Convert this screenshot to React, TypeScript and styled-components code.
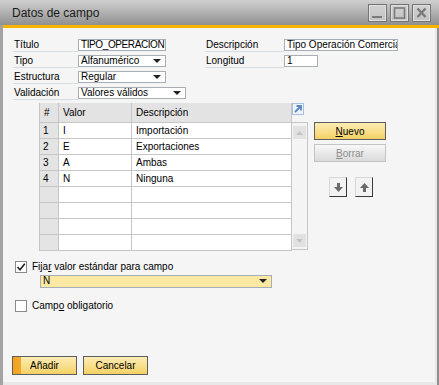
import React from 'react';
import styled, { createGlobalStyle } from 'styled-components';

const Global = createGlobalStyle`
  html, body { margin: 0; padding: 0; background: #ffffff; }
  body { font-family: "Liberation Sans", Arial, sans-serif; font-size: 10px; color: #000; }
  * { box-sizing: border-box; }
`;

const Window = styled.div`
  width: 439px;
  height: 385px;
  display: flex;
  flex-direction: column;
  background: #a3a3a3;
  padding: 0 0 0 3px;
  overflow: hidden;
`;

const TitleBar = styled.div`
  height: 25px;
  margin-left: -3px;
  padding: 0 8px 0 12px;
  display: flex;
  align-items: center;
  justify-content: space-between;
  background: linear-gradient(#d0d0d0 0%, #b4b4b4 45%, #909090 100%);
`;

const TitleText = styled.span`
  font-size: 12px;
  color: #1a1a1a;
  margin-top: 1px;
`;

const WinButtons = styled.div`
  display: flex;
  gap: 3px;
`;

const WinButton = styled.div`
  width: 19px;
  height: 18px;
  border: 1px solid #757575;
  background: linear-gradient(#d2d2d2, #c2c2c2);
  box-shadow: inset 0 0 0 1px #dedede;
  display: flex;
  align-items: center;
  justify-content: center;
`;

const Stripe = styled.div`
  height: 3px;
  background: #f6b300;
`;

const Body = styled.div`
  flex: 1;
  background: #f5f5f5;
  border-right: 2px solid #e8e8e8;
  border-bottom: 3px solid #e8e8e8;
  box-shadow: 2px 0 0 #8e8e8e;
  margin-right: 2px;
  display: flex;
  flex-direction: column;
  padding: 11px 0 0 0;
`;

const Form = styled.div`
  display: flex;
  padding-left: 10px;
`;

const Column = styled.div<{ $w: number }>`
  width: ${p => p.$w}px;
  display: flex;
  flex-direction: column;
  gap: 4px;
`;

const Row = styled.div`
  display: flex;
  height: 12px;
`;

const Label = styled.div<{ $w: number }>`
  width: ${p => p.$w}px;
  height: 13px;
  line-height: 12px;
  padding-left: 1px;
  border-bottom: 1px solid #d6dce4;
  white-space: nowrap;
`;

const Field = styled.div<{ $w: number; $bg?: string; $tight?: boolean; $h?: number }>`
  width: ${p => p.$w}px;
  height: ${p => p.$h || 12}px;
  border: 1px solid #a9aeb4;
  background: ${p => p.$bg || '#ffffff'};
  line-height: 10px;
  padding-left: 2px;
  letter-spacing: ${p => (p.$tight ? '-0.4px' : 'normal')};
  white-space: nowrap;
  overflow: hidden;
  position: relative;
  display: flex;
  align-items: center;
`;

const Caret = styled.span`
  position: absolute;
  right: 4px;
  top: 3px;
  width: 0;
  height: 0;
  border-left: 4px solid transparent;
  border-right: 4px solid transparent;
  border-top: 4px solid #222;
`;

const GridArea = styled.div`
  display: flex;
  margin: 4px 0 0 36px;
`;

const Table = styled.table`
  border-collapse: collapse;
  table-layout: fixed;
  width: 253px;
  border-left: 1px solid #c6c6c6;
`;

const Th = styled.th<{ $w: number }>`
  width: ${p => p.$w}px;
  height: 19px;
  background: #e3e3e3;
  border-right: 1px solid #c6c6c6;
  border-bottom: 1px solid #c6c6c6;
  text-align: left;
  font-weight: normal;
  padding: 0 0 0 4px;
  font-size: 10px;
`;

const Td = styled.td<{ $num?: boolean }>`
  height: 16px;
  background: ${p => (p.$num ? '#e4e4e4' : '#ffffff')};
  border-right: 1px solid #c6c6c6;
  border-bottom: 1px solid #c6c6c6;
  padding: 0 0 0 ${p => (p.$num ? 3 : 4)}px;
  font-size: 10px;
  white-space: nowrap;
  overflow: hidden;
`;

const ScrollCol = styled.div`
  width: 16px;
  display: flex;
  flex-direction: column;
`;

const ExpandBox = styled.div`
  height: 19px;
  display: flex;
  align-items: flex-start;
`;

const ScrollTrack = styled.div`
  height: 128px;
  border: 1px solid #c6c6c6;
  border-left: none;
  background: #f4f4f4;
  display: flex;
  flex-direction: column;
  justify-content: space-between;
  padding: 3px 1px 2px 1px;
`;

const ScrollBtn = styled.div`
  width: 13px;
  height: 13px;
  background: #e2e2e2;
  display: flex;
  align-items: center;
  justify-content: center;
`;

const SideButtons = styled.div`
  margin: 19px 0 0 6px;
  display: flex;
  flex-direction: column;
`;

const ActionButton = styled.div<{ $disabled?: boolean }>`
  width: 72px;
  height: 18px;
  margin-bottom: 4px;
  border: 1px solid ${p => (p.$disabled ? '#c4c4c4' : '#5e5e5e')};
  background: ${p =>
    p.$disabled
      ? 'linear-gradient(#f8f8f8, #e9e9e9 50%, #dadada)'
      : 'linear-gradient(#fcecb4, #f9e08e 50%, #f4d064)'};
  color: ${p => (p.$disabled ? '#8d8d8d' : '#000')};
  display: flex;
  align-items: center;
  justify-content: center;
  font-size: 10px;
`;

const ArrowRow = styled.div`
  display: flex;
  gap: 8px;
  margin: 11px 0 0 15px;
`;

const ArrowButton = styled.div`
  width: 18px;
  height: 20px;
  background: #f3f3f3;
  border-top: 1px solid #d8d8d8;
  border-left: 1px solid #d8d8d8;
  border-right: 1px solid #3a3a3a;
  border-bottom: 1px solid #3a3a3a;
  display: flex;
  align-items: center;
  justify-content: center;
`;

const CheckRow = styled.label<{ $mt: number }>`
  display: flex;
  align-items: center;
  gap: 5px;
  margin: ${p => p.$mt}px 0 0 12px;
  height: 12px;
`;

const CheckBox = styled.span`
  width: 12px;
  height: 12px;
  border: 1px solid #8a8a8a;
  background: #fff;
  display: flex;
  align-items: center;
  justify-content: center;
`;

const DefaultSelect = styled.div`
  margin: 2px 0 0 37px;
`;

const Footer = styled.div`
  display: flex;
  gap: 6px;
  margin: 44px 0 0 9px;
`;

const FooterButton = styled.div<{ $primary?: boolean }>`
  width: 65px;
  height: 19px;
  border: 1px solid #5e5e5e;
  background: ${p =>
    p.$primary
      ? 'linear-gradient(90deg, #f4a21c 0, #f0a830 8px, transparent 8px), linear-gradient(#fcecb4, #f9e08e 50%, #f4d064)'
      : 'linear-gradient(#fcecb4, #f9e08e 50%, #f4d064)'};
  display: flex;
  align-items: center;
  justify-content: center;
  font-size: 10px;
`;

const rows = [
  ['1', 'I', 'Importación'],
  ['2', 'E', 'Exportaciones'],
  ['3', 'A', 'Ambas'],
  ['4', 'N', 'Ninguna'],
  ['', '', ''],
  ['', '', ''],
  ['', '', ''],
  ['', '', ''],
];

const ArrowIcon = ({ up }: { up?: boolean }) => (
  <svg width="9" height="9" viewBox="0 0 9 9" style={{ transform: up ? 'rotate(180deg)' : undefined }}>
    <rect x="3" y="0" width="3" height="5" fill="#6a6a6a" />
    <polygon points="0,4 9,4 4.5,9" fill="#6a6a6a" />
  </svg>
);

export default function App() {
  return (
    <>
      <Global />
      <Window>
        <TitleBar>
          <TitleText>Datos de campo</TitleText>
          <WinButtons>
            <WinButton>
              <svg width="13" height="12" viewBox="0 0 13 12">
                <rect x="1" y="9" width="10" height="2" fill="#7a7a7a" />
              </svg>
            </WinButton>
            <WinButton>
              <svg width="13" height="12" viewBox="0 0 13 12">
                <rect x="1.5" y="1" width="10" height="10" fill="none" stroke="#7a7a7a" strokeWidth="1.6" />
              </svg>
            </WinButton>
            <WinButton>
              <svg width="13" height="12" viewBox="0 0 13 12">
                <path d="M2.5 1.5 L10.5 10 M10.5 1.5 L2.5 10" stroke="#7a7a7a" strokeWidth="2.4" />
              </svg>
            </WinButton>
          </WinButtons>
        </TitleBar>
        <Stripe />
        <Body>
          <Form>
            <Column $w={192}>
              <Row>
                <Label $w={65}>Título</Label>
                <Field $w={88} $tight>TIPO_OPERACION</Field>
              </Row>
              <Row>
                <Label $w={65}>Tipo</Label>
                <Field $w={88}>
                  Alfanumérico
                  <Caret />
                </Field>
              </Row>
              <Row>
                <Label $w={65}>Estructura</Label>
                <Field $w={88}>
                  Regular
                  <Caret />
                </Field>
              </Row>
              <Row>
                <Label $w={65}>Validación</Label>
                <Field $w={108}>
                  Valores válidos
                  <Caret />
                </Field>
              </Row>
            </Column>
            <Column $w={200}>
              <Row>
                <Label $w={79}>Descripción</Label>
                <Field $w={114}>Tipo Operación Comercia</Field>
              </Row>
              <Row>
                <Label $w={79}>Longitud</Label>
                <Field $w={34}>1</Field>
              </Row>
            </Column>
          </Form>

          <GridArea>
            <Table>
              <thead>
                <tr>
                  <Th $w={19}>#</Th>
                  <Th $w={73}>Valor</Th>
                  <Th $w={160}>Descripción</Th>
                </tr>
              </thead>
              <tbody>
                {rows.map((r, i) => (
                  <tr key={i}>
                    <Td $num>{r[0]}</Td>
                    <Td>{r[1]}</Td>
                    <Td>{r[2]}</Td>
                  </tr>
                ))}
              </tbody>
            </Table>
            <ScrollCol>
              <ExpandBox>
                <svg width="12" height="12" viewBox="0 0 12 12">
                  <rect x="0.5" y="0.5" width="11" height="11" fill="#eef3fa" stroke="#a9c0de" />
                  <path d="M3 9 L9 3 M4.5 3 H9 V7.5" stroke="#5d87c2" strokeWidth="1.8" fill="none" />
                </svg>
              </ExpandBox>
              <ScrollTrack>
                <ScrollBtn>
                  <svg width="7" height="4" viewBox="0 0 7 4">
                    <polygon points="0,4 7,4 3.5,0" fill="#c4c4c4" />
                  </svg>
                </ScrollBtn>
                <ScrollBtn>
                  <svg width="7" height="4" viewBox="0 0 7 4">
                    <polygon points="0,0 7,0 3.5,4" fill="#c4c4c4" />
                  </svg>
                </ScrollBtn>
              </ScrollTrack>
            </ScrollCol>
            <SideButtons>
              <ActionButton>
                <span><u>N</u>uevo</span>
              </ActionButton>
              <ActionButton $disabled>
                <span><u>B</u>orrar</span>
              </ActionButton>
              <ArrowRow>
                <ArrowButton>
                  <ArrowIcon />
                </ArrowButton>
                <ArrowButton>
                  <ArrowIcon up />
                </ArrowButton>
              </ArrowRow>
            </SideButtons>
          </GridArea>

          <CheckRow $mt={10}>
            <CheckBox>
              <svg width="10" height="10" viewBox="0 0 10 10">
                <path d="M1.5 5 L4 7.8 L8.8 1.8" stroke="#222" strokeWidth="1.6" fill="none" />
              </svg>
            </CheckBox>
            <span>Fija<u>r</u> valor estándar para campo</span>
          </CheckRow>
          <DefaultSelect>
            <Field $w={232} $bg="#fbe9a3" $h={13}>
              N
              <Caret />
            </Field>
          </DefaultSelect>
          <CheckRow $mt={12}>
            <CheckBox />
            <span>Camp<u>o</u> obligatorio</span>
          </CheckRow>

          <Footer>
            <FooterButton $primary>Añadir</FooterButton>
            <FooterButton>Cancelar</FooterButton>
          </Footer>
        </Body>
      </Window>
    </>
  );
}
